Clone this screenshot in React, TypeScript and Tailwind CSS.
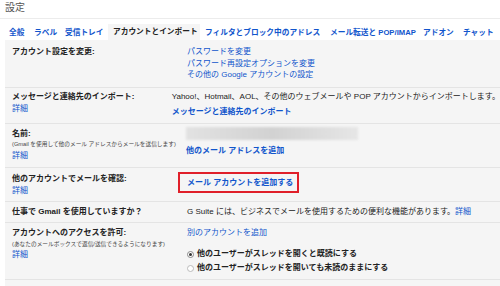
const font = { fontFamily: '"Liberation Sans", "Noto Sans CJK JP", sans-serif' };

function Label({ children }: { children: React.ReactNode }) {
  return <div className="font-bold text-[#222] leading-[12px]">{children}</div>;
}

function Detail({ className = "" }: { className?: string }) {
  return <div className={`text-[#15c] leading-[12px] ${className}`}>詳細</div>;
}

function Radio({ checked, children }: { checked?: boolean; children: React.ReactNode }) {
  return (
    <label className="flex items-center gap-[3px] leading-[14px] font-bold text-[#222]">
      <span
        className={`w-[7px] h-[7px] rounded-full border bg-white flex items-center justify-center ${
          checked ? "border-[#888]" : "border-[#bbb]"
        }`}
      >
        {checked && <span className="w-[3px] h-[3px] rounded-full bg-[#333]" />}
      </span>
      {children}
    </label>
  );
}

export default function App() {
  return (
    <div className="w-[500px] h-[286px] bg-white overflow-hidden text-[8px]" style={font}>
      {/* Title */}
      <div className="h-[19px] pl-[5px] pt-[2px] text-[10px] leading-[12px] text-[#555] border-b border-[#ececec]">
        設定
      </div>

      {/* Tabs */}
      <div className="h-[21px] flex items-end pl-[9px] font-bold text-[7.7px] whitespace-nowrap">
        <div className="flex items-center h-[15px] text-[#15c]">
          <span className="w-[25px] shrink-0">全般</span>
          <span className="w-[31px] shrink-0">ラベル</span>
          <span className="w-[43px] shrink-0">受信トレイ</span>
        </div>
        <div className="w-[92px] shrink-0 h-[16px] pl-[5px] bg-[#f5f5f5] text-[#222] font-semibold flex items-center">
          アカウントとインポート
        </div>
        <div className="flex items-center h-[15px] text-[#15c] pl-[5px]">
          <span className="w-[125px] shrink-0">フィルタとブロック中のアドレス</span>
          <span className="w-[93px] shrink-0">メール転送と POP/IMAP</span>
          <span className="w-[40px] shrink-0">アドオン</span>
          <span className="shrink-0">チャット</span>
        </div>
      </div>

      {/* Content */}
      <div className="ml-[5px] bg-[#f5f5f5] h-[246px]">
        {/* Row 1 */}
        <div className="flex h-[48px] pt-[6px] border-b border-[#e4e4e4]">
          <div className="w-[173px] pl-[7px]">
            <Label>アカウント設定を変更:</Label>
          </div>
          <div className="flex-1 pl-[9px] text-[#15c] leading-[11.5px]">
            <div>パスワードを変更</div>
            <div>パスワード再設定オプションを変更</div>
            <div>その他の Google アカウントの設定</div>
          </div>
        </div>

        {/* Row 2 */}
        <div className="flex h-[36px] pt-[3px] border-b border-[#e4e4e4]">
          <div className="w-[173px] pl-[7px]">
            <Label>メッセージと連絡先のインポート:</Label>
            <Detail />
          </div>
          <div className="flex-1 pl-[9px] leading-[12px] whitespace-nowrap">
            <div className="text-[#222]">Yahoo!、Hotmail、AOL、その他のウェブメールや POP アカウントからインポートします。</div>
            <div className="mt-[3px] text-[#15c] font-bold">メッセージと連絡先のインポート</div>
          </div>
        </div>

        {/* Row 3 */}
        <div className="flex h-[44px] pt-[4px] border-b border-[#e4e4e4]">
          <div className="w-[173px] pl-[7px]">
            <Label>名前:</Label>
            <div className="text-[5.7px] leading-[9px] text-[#444] whitespace-nowrap">
              (Gmail を使用して他のメール アドレスからメールを送信します)
            </div>
            <Detail className="mt-[1px]" />
          </div>
          <div className="flex-1 pl-[8px]">
            <div className="mt-[-1px] w-[172px] h-[13px] bg-gradient-to-r from-[#e2e2e2] via-[#d2d2d2] to-[#e6e6e6] blur-[1px]" />
            <div className="mt-[5px] text-[#15c] font-bold leading-[12px]">他のメール アドレスを追加</div>
          </div>
        </div>

        {/* Row 4 */}
        <div className="flex h-[34px] pt-[4px] border-b border-[#e4e4e4]">
          <div className="w-[173px] pl-[7px] pt-[1px]">
            <Label>他のアカウントでメールを確認:</Label>
            <Detail className="mt-[-0.5px]" />
          </div>
          <div className="flex-1">
            <div className="w-[121px] h-[21px] border-2 border-[#e0202a] pl-[7px] flex items-center text-[#15c] font-bold whitespace-nowrap">
              メール アカウントを追加する
            </div>
          </div>
        </div>

        {/* Row 5 */}
        <div className="flex h-[21px] pt-[4px] border-b border-[#e4e4e4]">
          <div className="w-[173px] pl-[7px]">
            <Label>仕事で Gmail を使用していますか？</Label>
          </div>
          <div className="flex-1 pl-[9px] leading-[12px] text-[#222] whitespace-nowrap">
            G Suite には、ビジネスでメールを使用するための便利な機能があります。
            <span className="text-[#15c]">詳細</span>
          </div>
        </div>

        {/* Row 6 */}
        <div className="flex h-[57px] pt-[4px] border-b border-[#e4e4e4]">
          <div className="w-[173px] pl-[7px]">
            <Label>アカウントへのアクセスを許可:</Label>
            <div className="mt-[1px] text-[5.7px] leading-[9px] text-[#444] whitespace-nowrap">
              (あなたのメールボックスで返信/送信できるようになります)
            </div>
            <Detail />
          </div>
          <div className="flex-1 pl-[9px]">
            <div className="text-[#15c] leading-[12px]">別のアカウントを追加</div>
            <div className="mt-[8px]">
              <Radio checked>他のユーザーがスレッドを開くと既読にする</Radio>
              <Radio>他のユーザーがスレッドを開いても未読のままにする</Radio>
            </div>
          </div>
        </div>
      </div>
    </div>
  );
}
